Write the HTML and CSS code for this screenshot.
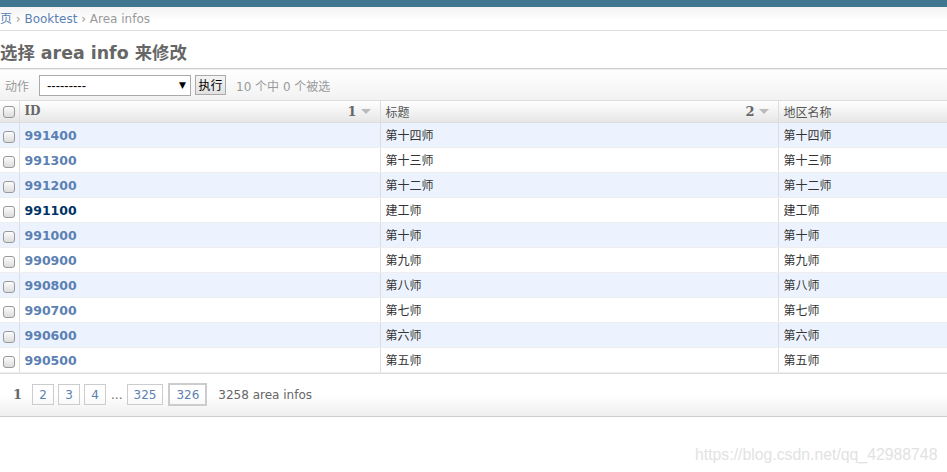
FILE: index.html
```html
<!DOCTYPE html>
<html>
<head>
<meta charset="utf-8">
<link rel="stylesheet" href="styles.css">
</head>
<body>
<div class="topbar"></div>
<div class="breadcrumbs"><a href="#">页</a> › <a href="#">Booktest</a> › <span class="cur">Area infos</span></div>
<h1 class="title">选择 area info 来修改</h1>
<div class="changelist">
  <div class="actions">
    <span class="lbl">动作</span>
    <div class="select"><span class="dashes">---------</span><span class="arrow">▼</span></div>
    <button class="go">执行</button>
    <span class="counter">10 个中 0 个被选</span>
  </div>
  <table class="results">
    <thead>
      <tr>
        <th class="cb"><span class="box"></span></th>
        <th class="c1"><div class="hd"><span>ID</span><span class="sort">1 <i class="tri"></i></span></div></th>
        <th class="c2"><div class="hd"><span>标题</span><span class="sort">2 <i class="tri"></i></span></div></th>
        <th class="c3"><div class="hd"><span>地区名称</span></div></th>
      </tr>
    </thead>
    <tbody>
      <tr class="odd"><td class="cb"><span class="box"></span></td><td class="c1"><a href="#">991400</a></td><td>第十四师</td><td>第十四师</td></tr>
      <tr><td class="cb"><span class="box"></span></td><td class="c1"><a href="#">991300</a></td><td>第十三师</td><td>第十三师</td></tr>
      <tr class="odd"><td class="cb"><span class="box"></span></td><td class="c1"><a href="#">991200</a></td><td>第十二师</td><td>第十二师</td></tr>
      <tr><td class="cb"><span class="box"></span></td><td class="c1"><a href="#" class="hov">991100</a></td><td>建工师</td><td>建工师</td></tr>
      <tr class="odd"><td class="cb"><span class="box"></span></td><td class="c1"><a href="#">991000</a></td><td>第十师</td><td>第十师</td></tr>
      <tr><td class="cb"><span class="box"></span></td><td class="c1"><a href="#">990900</a></td><td>第九师</td><td>第九师</td></tr>
      <tr class="odd"><td class="cb"><span class="box"></span></td><td class="c1"><a href="#">990800</a></td><td>第八师</td><td>第八师</td></tr>
      <tr><td class="cb"><span class="box"></span></td><td class="c1"><a href="#">990700</a></td><td>第七师</td><td>第七师</td></tr>
      <tr class="odd"><td class="cb"><span class="box"></span></td><td class="c1"><a href="#">990600</a></td><td>第六师</td><td>第六师</td></tr>
      <tr><td class="cb"><span class="box"></span></td><td class="c1"><a href="#">990500</a></td><td>第五师</td><td>第五师</td></tr>
    </tbody>
  </table>
  <div class="paginator">
    <span class="this">1</span>
    <a href="#" class="pg">2</a>
    <a href="#" class="pg">3</a>
    <a href="#" class="pg">4</a>
    <span class="dots">...</span>
    <a href="#" class="pg">325</a>
    <a href="#" class="pg end">326</a>
    <span class="total">3258 area infos</span>
  </div>
</div>
<div class="watermark">https://blog.csdn.net/qq_42988748</div>
</body>
</html>
```
FILE: styles.css
```css
* { box-sizing: border-box; }
html, body { margin: 0; padding: 0; background: #fff; }
body {
  font-family: "DejaVu Sans", Verdana, "Noto Sans CJK SC", sans-serif;
  font-size: 12px;
  color: #333;
  width: 947px;
  height: 472px;
  overflow: hidden;
}
a { color: #5b80b2; text-decoration: none; }
.topbar { height: 7px; background: #417690; }
.breadcrumbs {
  height: 24px;
  line-height: 25px;
  padding: 0;
  color: #999;
  font-size: 12px;
  background: linear-gradient(#f3f3f3, #fff 60%);
  border-bottom: 1px solid #ddd;
  font-family: "DejaVu Sans", "Noto Sans CJK SC", sans-serif;
}
.breadcrumbs .cur { color: #999; }
.title {
  margin: 0;
  height: 37px;
  line-height: 44px;
  font-size: 17.4px;
  font-weight: bold;
  color: #666;
  font-family: "DejaVu Sans", "Noto Sans CJK SC", sans-serif;
  white-space: nowrap;
}
.changelist { border-top: 1px solid #ccc; }
.actions {
  height: 32px;
  display: flex;
  align-items: center;
  padding-left: 5px;
  background: linear-gradient(#fff, #f2f2f2);
  border-top: 1px solid #eee;
  border-bottom: 1px solid #ddd;
  color: #999;
}
.actions .lbl { font-size: 12px; color: #999; margin-right: 10px; font-family: "Noto Sans CJK SC", sans-serif; }
.select {
  width: 152px;
  height: 21px;
  border: 1px solid #aaa;
  background: #fff;
  display: flex;
  align-items: center;
  justify-content: space-between;
  padding: 0 4px 0 7px;
  color: #000;
  font-size: 12px;
}
.select .dashes { font-family: "Liberation Sans", sans-serif; font-size: 13px; }
.select .arrow { font-size: 9px; color: #000; }
.go {
  margin-left: 4px;
  height: 20px;
  width: 31px;
  padding: 0;
  font-size: 12px;
  font-family: "Noto Sans CJK SC", sans-serif;
  border: 1px solid #aaa;
  background: linear-gradient(#f4f4f4, #e2e2e2);
  color: #000;
  line-height: 18px;
}
.counter { margin-left: 10px; color: #999; font-size: 12px; font-family: "DejaVu Sans", "Noto Sans CJK SC", sans-serif; }
.results {
  border-collapse: collapse;
  width: 947px;
  table-layout: fixed;
}
.results th {
  height: 21px;
  padding: 0;
  text-align: left;
  font-weight: bold;
  color: #666;
  background: linear-gradient(#fff, #e6e6e6);
  border-bottom: 1px solid #ddd;
  border-left: 1px solid #ddd;
  font-size: 12px;
  font-family: "DejaVu Serif", "Noto Sans CJK SC", serif;
}
.results th.c2, .results th.c3 { font-family: "Noto Sans CJK SC", sans-serif; font-weight: normal; color: #555; }
.results th.cb, .results td.cb { width: 19px; border-left: none; text-align: center; }
.results th.c1 { width: 361px; }
.results th.c2 { width: 398px; }
.hd { display: flex; justify-content: space-between; align-items: center; padding: 0 9px 0 5px; }
.sort { font-family: "DejaVu Serif", serif; font-weight: bold; color: #666; font-size: 13px; display: flex; align-items: center; gap: 4px; }
.tri { display: inline-block; width: 0; height: 0; border-left: 5px solid transparent; border-right: 5px solid transparent; border-top: 5px solid #bbb; }
.results td {
  height: 25px;
  padding: 0 0 0 5px;
  border-left: 1px solid #ddd;
  border-bottom: 1px solid #eee;
  font-family: "Noto Sans CJK SC", sans-serif;
  font-size: 12px;
  color: #333;
  white-space: nowrap;
}
.results td.cb { padding: 0; }
.results tr.odd td { background: #edf3fe; }
.results td.c1 a { font-weight: bold; font-family: "DejaVu Sans", sans-serif; font-size: 12.5px; }
.results td.c1 a.hov { color: #036; }
.box {
  display: inline-block;
  width: 12px;
  height: 12px;
  border: 1px solid #999;
  border-radius: 3px;
  background: linear-gradient(#fcfcfc, #dcdcdc);
  vertical-align: middle;
}
.results th .box { margin-top: 1px; }
.paginator {
  height: 44px;
  display: flex;
  align-items: center;
  padding-left: 13px;
  background: linear-gradient(#fff 50%, #efefef);
  border-top: 1px solid #ddd;
  border-bottom: 1px solid #ccc;
  font-size: 12px;
  color: #666;
}
.paginator .this { font-weight: bold; color: #666; font-family: "DejaVu Serif", serif; font-size: 13px; margin-right: 10px; }
.pg {
  height: 21px;
  min-width: 22px;
  border: 1px solid #ccc;
  padding: 0 6px;
  display: flex;
  align-items: center;
  justify-content: center;
  margin-right: 4px;
  font-size: 12px;
  font-family: "DejaVu Sans", sans-serif;
  font-weight: normal;
  line-height: 1;
}
.pg.end { border: 2px solid #ccc; height: 23px; padding: 0 6px; margin-left: 1px; }
.dots { margin: 0 4px 0 1px; color: #666; }
.total { margin-left: 7px; color: #666; font-family: "DejaVu Sans", sans-serif; }
.watermark {
  margin-top: 29px;
  padding-left: 695px;
  font-family: "Liberation Sans", Arial, sans-serif;
  font-size: 15.8px;
  color: #e2e2e2;
  white-space: nowrap;
}
```
